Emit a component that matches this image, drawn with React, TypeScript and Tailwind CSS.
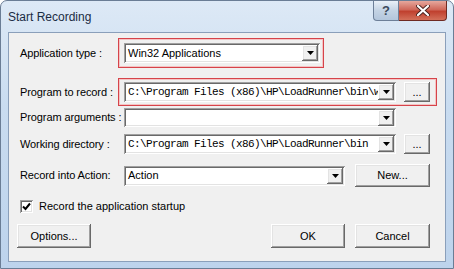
const raised =
  "bg-[#f0f0f0] shadow-[inset_-1px_-1px_#696969,inset_1px_1px_#ffffff,inset_-2px_-2px_#a0a0a0,inset_2px_2px_#e3e3e3]";
const sunken =
  "bg-white shadow-[inset_1px_1px_#a0a0a0,inset_-1px_-1px_#ffffff,inset_2px_2px_#696969,inset_-2px_-2px_#e3e3e3]";

const Arrow = () => (
  <div className={`w-[16px] h-[16px] mr-[2px] flex items-center justify-center shrink-0 ${raised}`}>
    <svg width="7" height="4" viewBox="0 0 7 4">
      <path d="M0 0h7L3.5 4z" fill="#000" />
    </svg>
  </div>
);

const Combo = ({ text, mono, className }: { text?: string; mono?: boolean; className: string }) => (
  <div className={`flex items-center ${sunken} ${className}`}>
    <div
      className={`flex-1 min-w-0 overflow-hidden whitespace-nowrap pl-[4px] text-black ${
        mono
          ? "font-['Liberation_Mono',monospace] text-[11px] tracking-[-0.6px]"
          : "font-['Liberation_Sans',Arial,sans-serif] text-[11px]"
      }`}
    >
      {text}
    </div>
    <Arrow />
  </div>
);

const Btn = ({ label, className }: { label: string; className: string }) => (
  <div
    className={`flex items-center justify-center shrink-0 text-[11px] text-black font-['Liberation_Sans',Arial,sans-serif] ${raised} ${className}`}
  >
    {label}
  </div>
);

const Label = ({ text }: { text: string }) => (
  <div className="w-[98px] shrink-0 whitespace-nowrap text-[11px] tracking-[-0.1px] text-black font-['Liberation_Sans',Arial,sans-serif]">
    {text}
  </div>
);

export default function App() {
  return (
    <div className="w-[454px] h-[269px] flex flex-col rounded-t-[7px] border border-[#6a7d95] bg-[linear-gradient(180deg,#dde9f6_0%,#c9dcf0_40%,#bdd3ec_100%)] overflow-hidden">
      {/* Title bar */}
      <div className="h-[31px] shrink-0 flex items-start">
        <div className="pl-[7px] pt-[7px] text-[12px] text-[#1b2c44] font-['Liberation_Sans',Arial,sans-serif]">
          Start Recording
        </div>
        <div className="ml-auto mr-[6px] flex">
          <div className="w-[26px] h-[20px] flex items-center justify-center rounded-bl-[4px] border border-t-0 border-[#6d7f98] bg-[linear-gradient(180deg,#e9f0f8,#c4d3e4_50%,#b3c6dc)] text-[13px] text-[#3c4a5c] font-['Liberation_Sans',Arial,sans-serif] font-bold">
            ?
          </div>
          <div className="w-[48px] h-[20px] flex items-center justify-center rounded-br-[4px] border border-t-0 border-l-0 border-[#6e2a22] bg-[linear-gradient(180deg,#e6a89d,#d0685a_45%,#c0412f_55%,#d3705a)]">
            <svg width="14" height="11" viewBox="0 0 14 11">
              <path d="M2 1l10 9M12 1L2 10" stroke="#4a2420" strokeWidth="4" strokeLinecap="round" />
              <path d="M2 1l10 9M12 1L2 10" stroke="#fff" strokeWidth="2.2" strokeLinecap="round" />
            </svg>
          </div>
        </div>
      </div>

      {/* Client area */}
      <div className="mx-[7px] h-[230px] shrink-0 flex flex-col border border-[#8a9fba] bg-[#f0f0f0] pl-[11px]">
        {/* Application type */}
        <div className="mt-[5px] h-[30px] flex items-center">
          <Label text="Application type :" />
          <div className="h-[30px] w-[206px] pt-[4px] pl-[5px] pr-[3px] border border-[#d6434a] shadow-[inset_0_0_0_1px_#f4c4c4]">
            <Combo text="Win32 Applications" className="h-[20px] w-[196px]" />
          </div>
        </div>

        {/* Program to record */}
        <div className="mt-[10px] h-[28px] flex items-center">
          <Label text="Program to record :" />
          <div className="h-[28px] w-[319px] flex items-center gap-[8px] pl-[5px] border border-[#d6434a] shadow-[inset_0_0_0_1px_#f4c4c4]">
            <Combo
              mono
              text={"C:\\Program Files (x86)\\HP\\LoadRunner\\bin\\w"}
              className="h-[20px] w-[272px]"
            />
            <Btn label="..." className="h-[20px] w-[26px]" />
          </div>
        </div>

        {/* Program arguments */}
        <div className="mt-[2px] h-[19px] flex items-center">
          <Label text="Program arguments :" />
          <Combo className="ml-[6px] h-[19px] w-[272px]" />
        </div>

        {/* Working directory */}
        <div className="mt-[7px] h-[20px] flex items-center">
          <Label text="Working directory :" />
          <Combo
            mono
            text={"C:\\Program Files (x86)\\HP\\LoadRunner\\bin"}
            className="ml-[6px] h-[20px] w-[272px]"
          />
          <Btn label="..." className="ml-[8px] h-[20px] w-[26px]" />
        </div>

        {/* Record into Action */}
        <div className="mt-[10px] h-[23px] flex items-center">
          <Label text="Record into Action:" />
          <Combo text="Action" className="ml-[6px] h-[20px] w-[221px]" />
          <Btn label="New..." className="ml-[10px] h-[23px] w-[75px]" />
        </div>

        {/* Checkbox */}
        <div className="mt-[13px] h-[13px] flex items-center gap-[6px]">
          <div className={`w-[13px] h-[13px] flex items-center justify-center ${sunken}`}>
            <svg width="9" height="9" viewBox="0 0 9 9">
              <path d="M1 4.5l2.5 2.5L8 1.5" stroke="#000" strokeWidth="2" fill="none" />
            </svg>
          </div>
          <div className="text-[11px] text-black font-['Liberation_Sans',Arial,sans-serif]">
            Record the application startup
          </div>
        </div>

        {/* Buttons */}
        <div className="mt-[11px] h-[24px] flex items-center pr-[15px] -ml-[3px]">
          <Btn label="Options..." className="h-[24px] w-[74px]" />
          <Btn label="OK" className="ml-auto h-[24px] w-[74px]" />
          <Btn label="Cancel" className="ml-[10px] h-[24px] w-[75px]" />
        </div>
      </div>
    </div>
  );
}
